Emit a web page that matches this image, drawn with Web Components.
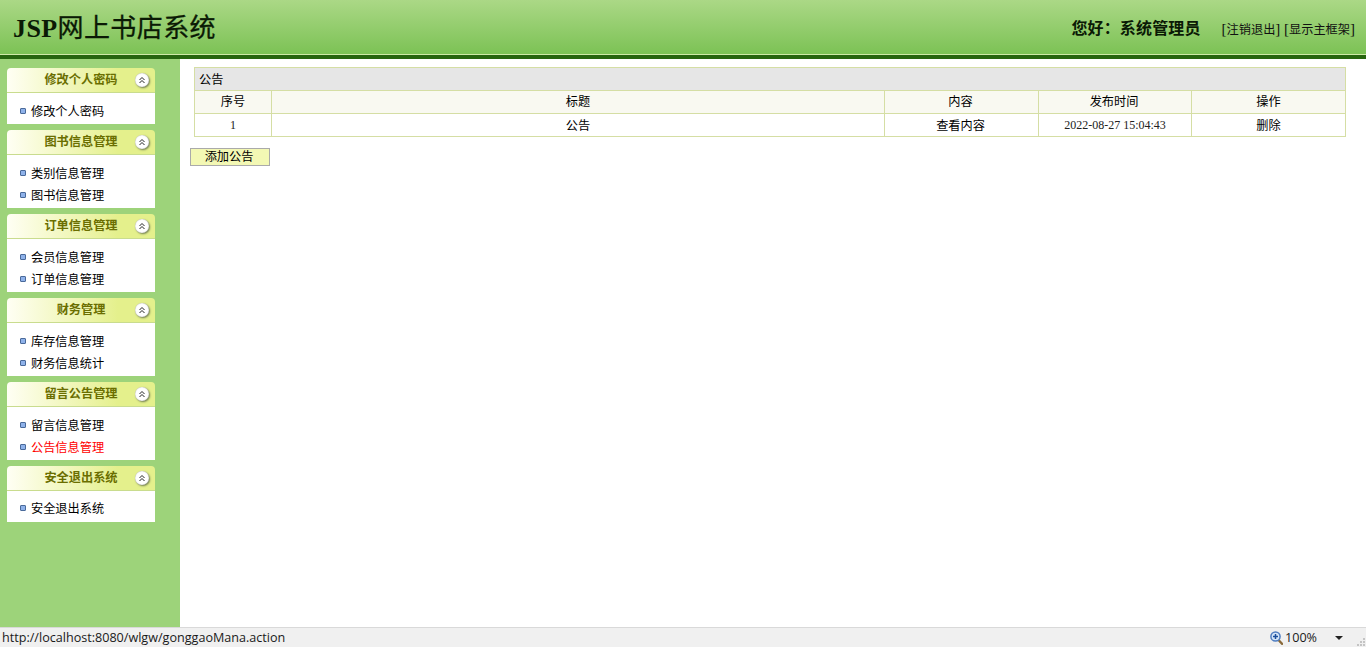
<!DOCTYPE html>
<html lang="zh"><head><meta charset="utf-8"><title>JSP网上书店系统</title>
<style>
html,body{margin:0;padding:0;height:647px;overflow:hidden;background:#fff;font-family:"Liberation Serif","Noto Sans CJK SC",serif;font-size:12px;color:#000}
app-shell{height:647px}
</style></head><body>
<app-shell>
  <app-header slot="header"></app-header>
  <side-bar slot="side">
    <side-panel title="修改个人密码"><side-link>修改个人密码</side-link></side-panel>
    <side-panel title="图书信息管理"><side-link>类别信息管理</side-link><side-link>图书信息管理</side-link></side-panel>
    <side-panel title="订单信息管理"><side-link>会员信息管理</side-link><side-link>订单信息管理</side-link></side-panel>
    <side-panel title="财务管理"><side-link>库存信息管理</side-link><side-link>财务信息统计</side-link></side-panel>
    <side-panel title="留言公告管理"><side-link>留言信息管理</side-link><side-link active>公告信息管理</side-link></side-panel>
    <side-panel title="安全退出系统"><side-link>安全退出系统</side-link></side-panel>
  </side-bar>
  <notice-page slot="main"></notice-page>
  <status-bar slot="status"></status-bar>
</app-shell>
<script>
function def(name,css,html){
  customElements.define(name,class extends HTMLElement{
    constructor(){super();const r=this.attachShadow({mode:"open"});
      r.innerHTML="<style>"+css+"</style>"+(typeof html==="function"?html(this):html);}
  });
}
def("app-shell",
 `:host{display:grid;grid-template-columns:180px 1fr;grid-template-rows:59px 568px 20px;width:1366px}
  .h{grid-column:1/3;display:block}.s{grid-column:1/3;display:block}`,
 `<slot class="h" name="header"></slot><slot name="side"></slot><slot name="main"></slot><slot class="s" name="status"></slot>`);
def("app-header",
 `:host{display:flex;align-items:flex-start;justify-content:space-between;height:59px;box-sizing:border-box;
   background:linear-gradient(#abd886,#7cc255 54px);border-bottom:4px solid #27650f;position:relative}
  :host::after{content:"";position:absolute;left:0;right:0;bottom:0;height:1px;background:#cfeaa8}
  h1{margin:14px 0 0 13px;font:bold 26px/30px "Liberation Serif","Noto Sans CJK SC",serif;color:#0b1a05;letter-spacing:.4px}
  h1 span{font-weight:normal;-webkit-text-stroke:.3px #0b1a05}
  .r{display:flex;align-items:baseline;margin:17px 11px 0 0}
  b{font:bold 16px/20px "Noto Sans CJK SC",serif;color:#0b1a05;margin-right:21px;letter-spacing:.15px}
  .l{font:12.2px/20px "Noto Sans CJK SC",serif;color:#111;word-spacing:1px}
  .l i{font:normal 15px/20px "Liberation Serif",serif}`,
 `<h1>JSP<span>网上书店系统</span></h1><div class="r"><b>您好：系统管理员</b><div class="l"><i>[</i><span>注销退出</span><i>]</i> <i>[</i><span>显示主框架</span><i>]</i></div></div>`);
def("side-bar",
 `:host{display:flex;flex-direction:column;gap:6px;background:#9dd37a;padding:9px 25px 0 7px;box-sizing:border-box;height:568px}`,
 `<slot></slot>`);
def("side-panel",
 `:host{display:block;width:148px}
  .t{display:flex;align-items:center;height:24px;border-bottom:1px solid #c9dc8e;border-radius:4px 4px 0 0;
     background:linear-gradient(90deg,#fffff4 0,#eef5b0 50%,#e4f08c 75%)}
  .n{flex:1;text-align:center;padding:0 0 2px 20px;box-sizing:border-box;height:24px;font:bold 12.2px/22px "Noto Sans CJK SC",serif;color:#6a6e00;white-space:nowrap}
  .c{width:14px;height:14px;border-radius:50%;background:#fff;box-shadow:1px 1px 2px #6d7a50,inset 0 0 1px #999;margin:0 6px 0 0;flex:none;display:block}
  .b{display:flex;flex-direction:column;padding:7px 0 2px 13px;background:#fff}
  :host(:last-child) .b{padding:6px 0 3px 13px}`,
 el=>`<div class="t"><span class="n">${el.getAttribute("title")}</span><svg class="c" viewBox="0 0 14 14" fill="none" stroke="#222" stroke-width="1"><path d="M4.5 7 7 4.5 9.5 7M4.5 10 7 7.5 9.5 10"/></svg></div><div class="b"><slot></slot></div>`);
def("side-link",
 `:host{display:flex;align-items:center;gap:5px;height:22px;font:12.2px/23px "Noto Sans CJK SC",serif;color:#000;white-space:nowrap}
  :host([active]){color:#f00}
  i{width:4px;height:4px;flex:none;background:#8fb2ea;border:1px solid #4a6a9a;border-radius:1px}
  span{display:block;height:22px}`,
 `<i></i><span><slot></slot></span>`);
def("notice-page",
 `:host{display:block;padding:8px 20px 0 10px;box-sizing:border-box;height:568px;background:#fff}
  table{width:1152px;margin-left:4px;border-collapse:collapse;table-layout:fixed;font:12.2px/18px "Noto Sans CJK SC",serif;color:#000}
  td{border:1px solid #d5dea4;padding:0;text-align:center;box-sizing:border-box}
  tr{height:23px}
  .cap{background:#e6e6e6;text-align:left;padding-left:4px}
  .hd td{background:#f9f9f1;padding-bottom:2px}
  .hd td:nth-child(3),.hd td:nth-child(4),.view{padding-right:2px}
  .num{font:12px/18px "Liberation Serif",serif;color:#222}
  button{display:block;margin:11px 0 0 0;width:80px;height:18px;padding:0 2px 2px 0;box-sizing:border-box;border:1px solid #aaa;background:#f3f8b4;font:12.2px/15px "Noto Sans CJK SC",serif;color:#000}`,
 `<table><colgroup><col style="width:77px"><col style="width:613px"><col style="width:154px"><col style="width:153px"><col style="width:154px"></colgroup>
  <tr><td class="cap" colspan="5">公告</td></tr>
  <tr class="hd"><td>序号</td><td>标题</td><td>内容</td><td>发布时间</td><td>操作</td></tr>
  <tr><td class="num">1</td><td>公告</td><td class="view">查看内容</td><td class="num">2022-08-27 15:04:43</td><td>删除</td></tr></table>
  <button>添加公告</button>`);
def("status-bar",
 `:host{display:flex;align-items:center;height:20px;box-sizing:border-box;background:#f0f0f0;border-top:1px solid #d9d9d9;
    font:12.6px/19px "Open Sans","Noto Sans",sans-serif;color:#1a1a1a}
  .u{margin-left:2px;flex:1}
  svg{display:block;flex:none}
  .p{margin:0 18px 0 2px}
  .a{width:0;height:0;border:4.5px solid transparent;border-top:4.5px solid #222;border-bottom:0;margin-right:14px}
  .g{align-self:flex-end}`,
 `<span class="u">http://localhost:8080/wlgw/gonggaoMana.action</span><svg width="13" height="14" viewBox="0 0 13 14"><path d="M8.5 9 12 12.8" stroke="#8a6a3a" stroke-width="2.4" stroke-linecap="round"/><circle cx="5.5" cy="5.5" r="4.6" fill="#d6e6f8" stroke="#4f7dc0" stroke-width="1.5"/><path d="M3 5.5h5M5.5 3v5" stroke="#1d4f9c" stroke-width="1.5"/></svg><span class="p">100%</span><div class="a"></div><svg class="g" width="9" height="9" viewBox="0 0 9 9" fill="#c4c4c4"><rect x="6" y="0" width="2" height="2"/><rect x="3" y="3" width="2" height="2"/><rect x="6" y="3" width="2" height="2"/><rect x="0" y="6" width="2" height="2"/><rect x="3" y="6" width="2" height="2"/><rect x="6" y="6" width="2" height="2"/></svg>`);
</script>
</body></html>
